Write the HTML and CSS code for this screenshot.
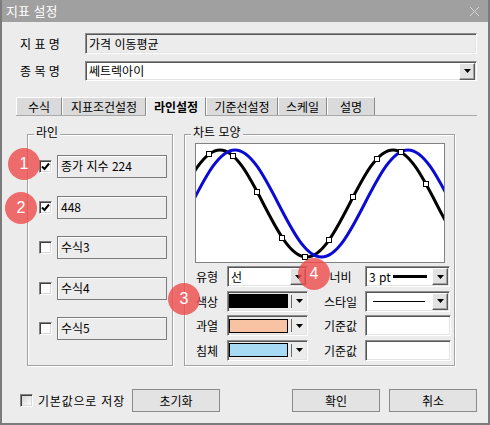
FILE: index.html
```html
<!DOCTYPE html>
<html lang="ko">
<head>
    <meta charset="UTF-8">
    <meta name="viewport" content="width=device-width, initial-scale=1.0">
    <title>지표 설정</title>
    <link rel="stylesheet" href="styles.css">
</head>
<body>
<div class="window">
    <div class="titlebar">
        <span class="title">지표 설정</span>
        <svg class="close" width="9" height="9" viewBox="0 0 9 9"><path d="M0 0L9 9M9 0L0 9" stroke="#d6d6d6" stroke-width="1"/></svg>
    </div>

    <div class="content">
        <div class="field-row">
            <span class="field-label">지 표 명</span>
            <div class="edit sunken readonly">가격 이동평균</div>
        </div>
        <div class="field-row second">
            <span class="field-label">종 목 명</span>
            <div class="combo sunken">
                <span class="combo-text">쎄트렉아이</span>
                <span class="drop-btn"><svg width="7" height="4" viewBox="0 0 7 4"><path d="M0 0H7L3.5 4Z"/></svg></span>
            </div>
        </div>

        <div class="tabs">
            <div class="tab">수식</div>
            <div class="tab">지표조건설정</div>
            <div class="tab active">라인설정</div>
            <div class="tab">기준선설정</div>
            <div class="tab">스케일</div>
            <div class="tab">설명</div>
        </div>

        <div class="tab-panel">
            <!-- line list -->
            <div class="group line-group">
                <span class="group-title">라인</span>
                <div class="line-row">
                    <span class="check"><svg width="11" height="11" viewBox="0 0 11 11"><path d="M2 5.5L4.5 8L9 2.5" fill="none" stroke="#000" stroke-width="2"/></svg></span>
                    <div class="line-box">종가 지수 224</div>
                </div>
                <div class="line-row">
                    <span class="check"><svg width="11" height="11" viewBox="0 0 11 11"><path d="M2 5.5L4.5 8L9 2.5" fill="none" stroke="#000" stroke-width="2"/></svg></span>
                    <div class="line-box">448</div>
                </div>
                <div class="line-row">
                    <span class="check"></span>
                    <div class="line-box">수식3</div>
                </div>
                <div class="line-row">
                    <span class="check"></span>
                    <div class="line-box">수식4</div>
                </div>
                <div class="line-row">
                    <span class="check"></span>
                    <div class="line-box">수식5</div>
                </div>
            </div>

            <!-- chart shape -->
            <div class="group shape-group">
                <span class="group-title">차트 모양</span>
                <div class="chart">
                    <svg width="248" height="118" viewBox="196 144 248 118">
                        <path d="M133.5,257 C165,257 188.5,150 220,150 S275,257 306.5,257 S361.5,150 393,150 S448,257 479.5,257" fill="none" stroke="#000" stroke-width="3"/>
                        <path d="M148.5,257 C180,257 203.5,150 235,150 S290,257 321.5,257 S376.5,150 408,150 S463,257 494.5,257" fill="none" stroke="#0a0ad2" stroke-width="3"/>
                        <g fill="#fff" stroke="#000" stroke-width="1">
                            <rect x="206.5" y="151.5" width="5" height="5"/>
                            <rect x="230.5" y="153.5" width="5" height="5"/>
                            <rect x="254.5" y="189.5" width="5" height="5"/>
                            <rect x="279.5" y="235.5" width="5" height="5"/>
                            <rect x="302.5" y="254.5" width="5" height="5"/>
                            <rect x="326.5" y="237.5" width="5" height="5"/>
                            <rect x="350.5" y="194.5" width="5" height="5"/>
                            <rect x="374.5" y="156.5" width="5" height="5"/>
                            <rect x="398.5" y="149.5" width="5" height="5"/>
                            <rect x="423.5" y="181.5" width="5" height="5"/>
                        </g>
                    </svg>
                </div>

                <div class="props">
                    <span class="prop-label">유형</span>
                    <div class="combo sunken">
                        <span class="combo-text">선</span>
                        <span class="drop-btn"><svg width="7" height="4" viewBox="0 0 7 4"><path d="M0 0H7L3.5 4Z"/></svg></span>
                    </div>
                    <span class="prop-label right">너비</span>
                    <div class="combo sunken">
                        <span class="combo-text fixed">3 pt</span>
                        <span class="width-line"></span>
                        <span class="drop-btn"><svg width="7" height="4" viewBox="0 0 7 4"><path d="M0 0H7L3.5 4Z"/></svg></span>
                    </div>

                    <span class="prop-label">색상</span>
                    <div class="color-combo sunken">
                        <span class="swatch black"></span>
                        <span class="sep"></span>
                        <svg width="7" height="4" viewBox="0 0 7 4"><path d="M0 0H7L3.5 4Z"/></svg>
                    </div>
                    <span class="prop-label right">스타일</span>
                    <div class="combo sunken">
                        <span class="style-line"></span>
                        <span class="drop-btn"><svg width="7" height="4" viewBox="0 0 7 4"><path d="M0 0H7L3.5 4Z"/></svg></span>
                    </div>

                    <span class="prop-label">과열</span>
                    <div class="color-combo sunken">
                        <span class="swatch peach"></span>
                        <span class="sep"></span>
                        <svg width="7" height="4" viewBox="0 0 7 4"><path d="M0 0H7L3.5 4Z"/></svg>
                    </div>
                    <span class="prop-label right">기준값</span>
                    <div class="edit sunken value"></div>

                    <span class="prop-label">침체</span>
                    <div class="color-combo sunken">
                        <span class="swatch sky"></span>
                        <span class="sep"></span>
                        <svg width="7" height="4" viewBox="0 0 7 4"><path d="M0 0H7L3.5 4Z"/></svg>
                    </div>
                    <span class="prop-label right">기준값</span>
                    <div class="edit sunken value"></div>
                </div>
            </div>
        </div>

        <div class="footer">
            <span class="check disabled"></span>
            <span class="footer-label">기본값으로 저장</span>
            <button class="btn reset">초기화</button>
            <button class="btn ok">확인</button>
            <button class="btn">취소</button>
        </div>
    </div>

    <!-- numbered callouts -->
    <span class="badge b1">1</span>
    <span class="badge b2">2</span>
    <span class="badge b3">3</span>
    <span class="badge b4">4</span>
</div>
</body>
</html>
```

FILE: styles.css
```css
* {
    box-sizing: border-box;
}
body {
    margin: 0;
    background: #fff;
    font-family: "Noto Sans CJK KR", "Noto Sans", sans-serif;
    font-size: 12px;
    color: #000;
}
.window {
    position: relative;
    width: 490px;
    height: 425px;
    background: #ececec;
    border: 2px solid #7b7b7b;
    border-top: 0;
}
.titlebar {
    height: 22px;
    background: #a0a0a0;
    display: flex;
    align-items: center;
    justify-content: space-between;
    padding: 0 9px 0 4px;
}
.title {
    color: #fff;
    font-size: 13px;
    line-height: 22px;
}
.content {
    padding: 11px 11px 0 14px;
}

/* sunken / raised borders */
.sunken {
    border: 1px solid;
    border-color: #8e8e8e #fff #fff #8e8e8e;
    box-shadow: inset 1px 1px 0 #585858, inset -1px -1px 0 #e3e3e3;
}
.drop-btn {
    width: 16px;
    height: 17px;
    margin-right: 1px;
    display: flex;
    align-items: center;
    justify-content: center;
    background: #e2e2e2;
    border: 1px solid;
    border-color: #fff #5a5a5a #5a5a5a #fff;
    box-shadow: inset -1px -1px 0 #a0a0a0;
}

.field-row {
    display: flex;
    align-items: center;
    height: 21px;
}
.field-row.second {
    margin-top: 7px;
    height: 20px;
}
.field-label {
    width: 69px;
    padding-left: 4px;
    line-height: 20px;
}
.edit {
    flex: 1;
    height: 100%;
    background: #fff;
    padding-left: 3px;
    line-height: 19px;
}
.edit.readonly {
    background: #ececec;
}
.combo {
    flex: 1;
    height: 100%;
    display: flex;
    align-items: center;
    background: #fff;
}
.combo-text {
    flex: 1;
    padding-left: 3px;
    line-height: 18px;
}
.combo-text.fixed {
    flex: none;
}

/* tabs */
.tabs {
    display: flex;
    margin-top: 16px;
    height: 18px;
}
.tab {
    flex: none;
    text-align: center;
    line-height: 17px;
    background: #dadada;
    border-top: 1px solid #fff;
    border-left: 1px solid #fff;
    border-right: 1px solid #8a8a8a;
}
.tab:nth-child(1) { width: 46px; }
.tab:nth-child(2) { width: 84px; }
.tab:nth-child(3) { width: 60px; }
.tab:nth-child(4) { width: 72px; }
.tab:nth-child(5) { width: 49px; }
.tab:nth-child(6) { width: 48px; }
.tab.active {
    background: #ececec;
    font-weight: bold;
    height: 19px;
    position: relative;
    z-index: 1;
}
.tab-panel {
    display: flex;
    gap: 11px;
    border-top: 1px solid #a9a9a9;
    padding: 18px 0 0 11px;
}

/* group boxes */
.group {
    position: relative;
    height: 232px;
    border: 1px solid #a2a2a2;
    box-shadow: inset 1px 1px 0 #fff, 1px 1px 0 #fff;
}
.group-title {
    position: absolute;
    top: -10px;
    left: 6px;
    padding: 0 2px;
    background: #ececec;
    line-height: 14px;
}
.line-group {
    width: 146px;
    padding: 20px 0 0 11px;
    display: flex;
    flex-direction: column;
    gap: 17.5px;
}
.line-row {
    display: flex;
    align-items: center;
    height: 23px;
}
.check {
    width: 13px;
    height: 13px;
    margin-right: 5px;
    background: #fff;
    border: 1px solid;
    border-color: #808080 #fff #fff #808080;
    box-shadow: inset 1px 1px 0 #404040, inset -1px -1px 0 #d8d8d8;
    display: flex;
    align-items: center;
    justify-content: center;
}
.line-box {
    width: 110px;
    height: 23px;
    border: 1px solid #7c7c7c;
    box-shadow: inset 1px 1px 0 #fff;
    padding-left: 3px;
    line-height: 20px;
}

.shape-group {
    width: 271px;
    padding: 8px 0 0 10px;
}
.chart {
    width: 250px;
    height: 120px;
    background: #fff;
    border: 1px solid #828282;
}
.chart svg {
    display: block;
}
.props {
    display: grid;
    grid-template-columns: 32px 81px 57px 85px;
    grid-auto-rows: 21px;
    row-gap: 3.5px;
    margin-top: 3px;
}
.prop-label {
    padding-left: 1px;
    line-height: 21px;
}
.prop-label.right {
    text-align: center;
    padding-left: 8px;
}
.width-line {
    flex: 1;
    height: 3px;
    background: #000;
    margin: 0 5px 0 2px;
}
.style-line {
    flex: 1;
    height: 1px;
    background: #000;
    margin: 0 7px;
}
.color-combo {
    display: flex;
    align-items: center;
    padding-left: 1px;
    background: #ececec;
}
.swatch {
    width: 59px;
    height: 14px;
    border: 1px solid #000;
}
.swatch.black {
    background: #000;
}
.swatch.peach {
    background: #f8c3a3;
}
.swatch.sky {
    background: #a6dbf3;
}
.sep {
    width: 1px;
    height: 13px;
    background: #6a6a6a;
    margin: 0 4px 0 3px;
}
.value {
    width: 86px;
}

/* footer */
.footer {
    display: flex;
    align-items: center;
    margin-top: 23px;
    height: 23px;
    padding-left: 4px;
}
.check.disabled {
    margin-right: 5px;
    background: linear-gradient(135deg, #d0d0d0, #fff);
}
.footer-label {
    line-height: 23px;
    letter-spacing: 0.8px;
}
.btn {
    width: 88px;
    height: 23px;
    font-family: inherit;
    font-size: 12px;
    color: #000;
    background: #e3e3e3;
    border: 1px solid #8a8a8a;
    padding: 0;
}
.btn.reset {
    margin-left: 7px;
}
.btn.ok {
    margin-left: auto;
    margin-right: 9px;
}

/* callout badges */
.badge {
    position: absolute;
    width: 32px;
    height: 32px;
    border-radius: 50%;
    background: rgba(239, 75, 75, 0.8);
    color: #fff;
    font-family: "Liberation Sans", sans-serif;
    font-size: 16px;
    display: flex;
    align-items: center;
    justify-content: center;
}
.b1 { left: 6px; top: 148px; }
.b2 { left: 3px; top: 192px; }
.b3 { left: 166px; top: 283px; }
.b4 { left: 296px; top: 258px; }
```
